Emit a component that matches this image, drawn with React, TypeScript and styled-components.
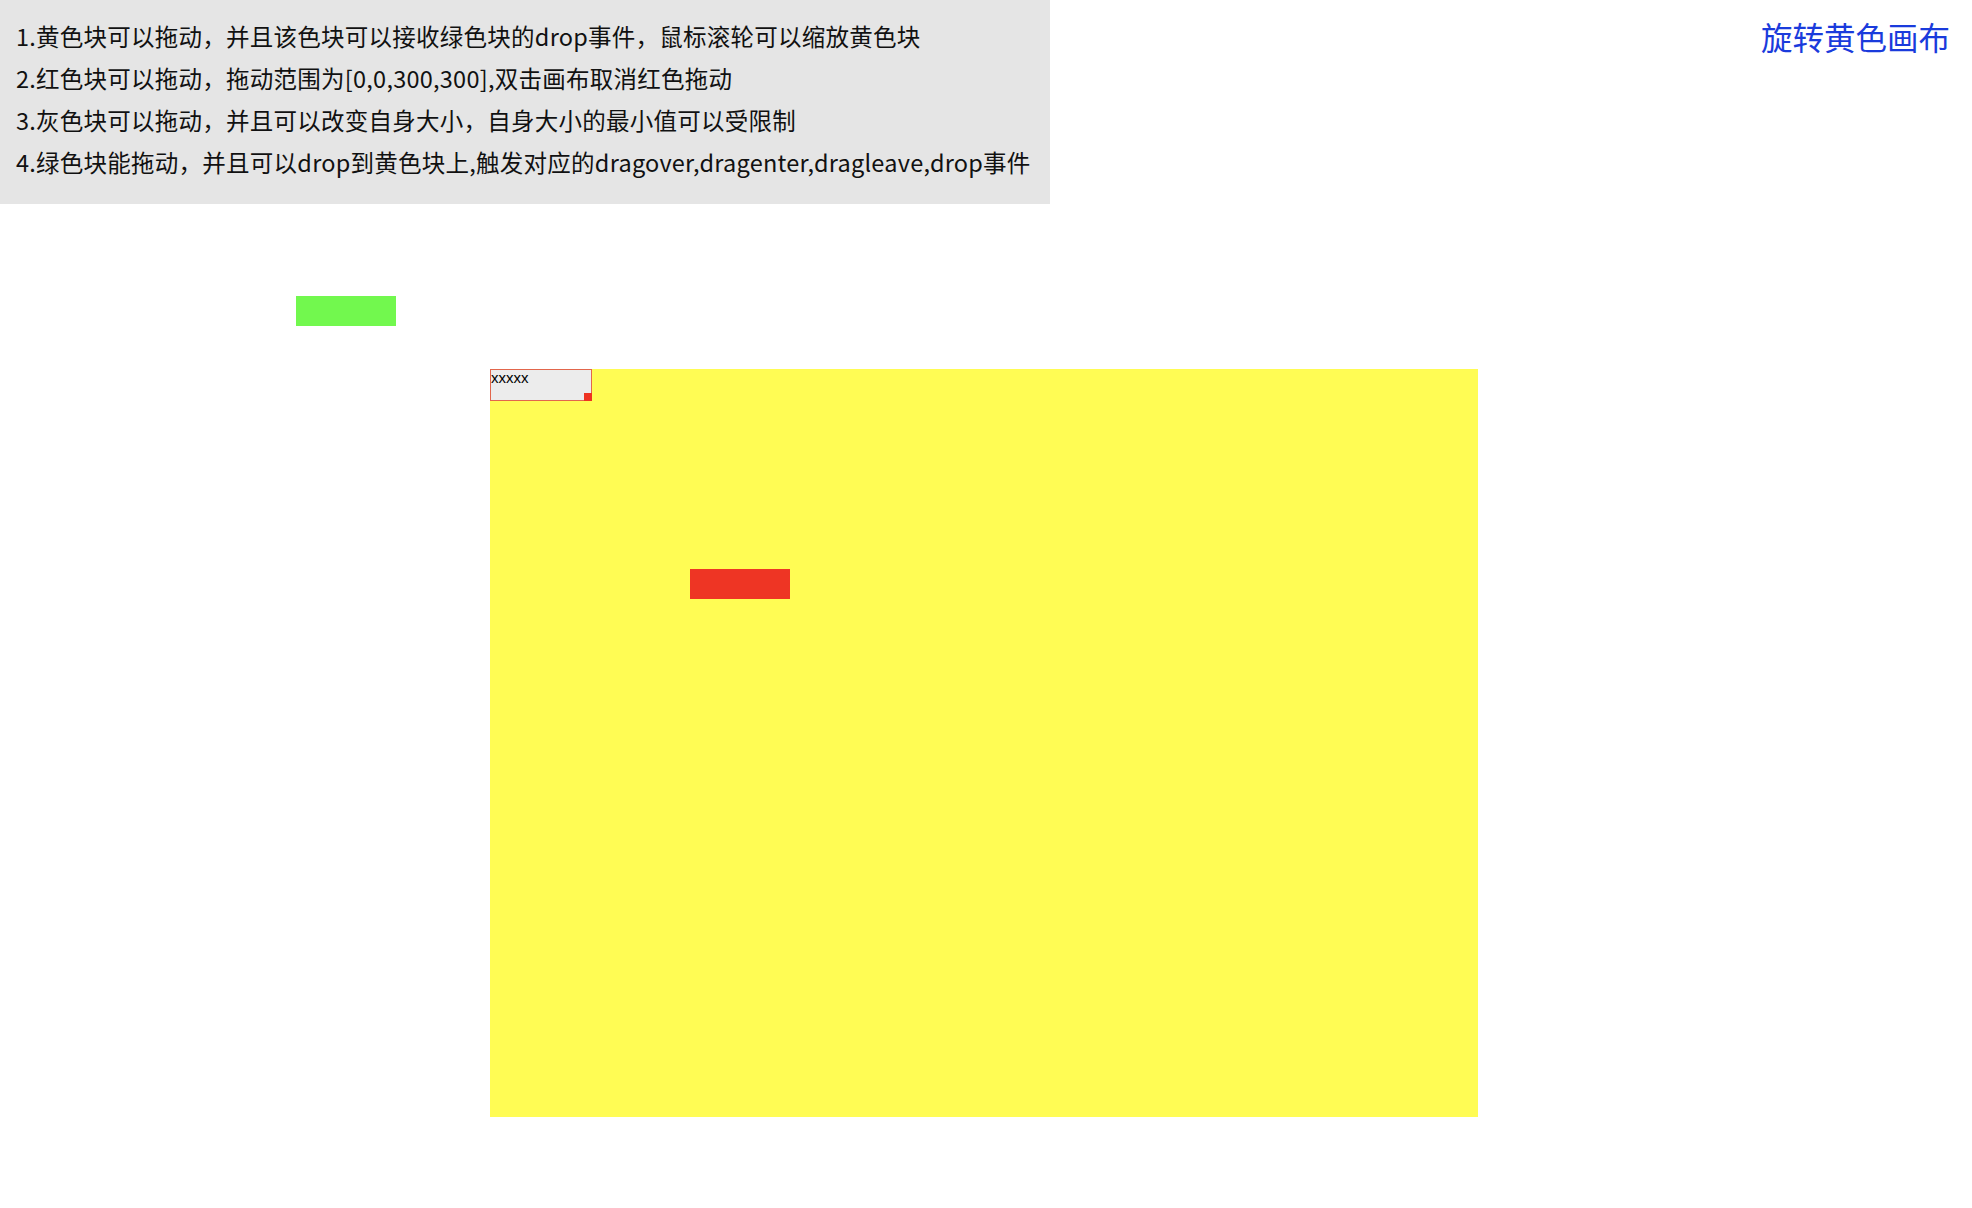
import React from "react";
import styled, { createGlobalStyle } from "styled-components";

const GlobalStyle = createGlobalStyle`
  html, body { margin: 0; padding: 0; background: #ffffff; }
  body { font-family: "Noto Sans CJK SC", "Noto Sans", sans-serif; color: #111; }
`;

const Page = styled.div`
  position: relative;
  width: 1972px;
  height: 1208px;
  overflow: hidden;
`;

const Header = styled.header`
  display: flex;
  justify-content: space-between;
  align-items: flex-start;
`;

const Notes = styled.div`
  width: 1050px;
  height: 204px;
  box-sizing: border-box;
  background: #e5e5e5;
  padding: 15px 0 0 16px;
`;

const Note = styled.p`
  margin: 0;
  font-size: 23.5px;
  line-height: 42px;
  letter-spacing: 0.25px;
  color: #111;
  white-space: nowrap;
`;

const RotateLink = styled.a`
  margin: 13px 22px 0 0;
  font-size: 31.5px;
  line-height: 46px;
  color: #1a3bdc;
  cursor: pointer;
  text-decoration: none;
`;

const Canvas = styled.div`
  position: absolute;
  left: 0;
  top: 0;
  width: 100%;
  height: 100%;
  pointer-events: none;
`;

const Block = styled.div<{ $x: number; $y: number; $w: number; $h: number; $bg: string }>`
  position: absolute;
  left: ${(p) => p.$x}px;
  top: ${(p) => p.$y}px;
  width: ${(p) => p.$w}px;
  height: ${(p) => p.$h}px;
  background: ${(p) => p.$bg};
  pointer-events: auto;
`;

const Resizable = styled.div`
  position: absolute;
  left: 0;
  top: 0;
  width: 100px;
  height: 30px;
  background: #ececec;
  border: 1px solid #e2664c;
  font-family: "Liberation Sans", Arial, sans-serif;
  font-size: 15px;
  line-height: 16px;
  color: #000;
`;

const Handle = styled.span`
  position: absolute;
  right: -1px;
  bottom: -1px;
  width: 8px;
  height: 8px;
  background: #ee3322;
`;

const RedBlock = styled.div`
  position: absolute;
  left: 200px;
  top: 200px;
  width: 100px;
  height: 30px;
  background: #ee3524;
`;

export default function App() {
  return (
    <>
      <GlobalStyle />
      <Page>
        <Header>
          <Notes>
            <Note>1.黄色块可以拖动，并且该色块可以接收绿色块的drop事件，鼠标滚轮可以缩放黄色块</Note>
            <Note>2.红色块可以拖动，拖动范围为[0,0,300,300],双击画布取消红色拖动</Note>
            <Note>3.灰色块可以拖动，并且可以改变自身大小，自身大小的最小值可以受限制</Note>
            <Note>4.绿色块能拖动，并且可以drop到黄色块上,触发对应的dragover,dragenter,dragleave,drop事件</Note>
          </Notes>
          <RotateLink>旋转黄色画布</RotateLink>
        </Header>
        <Canvas>
          <Block $x={296} $y={296} $w={100} $h={30} $bg="#72f84e" />
          <Block $x={490} $y={369} $w={988} $h={748} $bg="#fffc54">
            <Resizable>
              xxxxx
              <Handle />
            </Resizable>
            <RedBlock />
          </Block>
        </Canvas>
      </Page>
    </>
  );
}
